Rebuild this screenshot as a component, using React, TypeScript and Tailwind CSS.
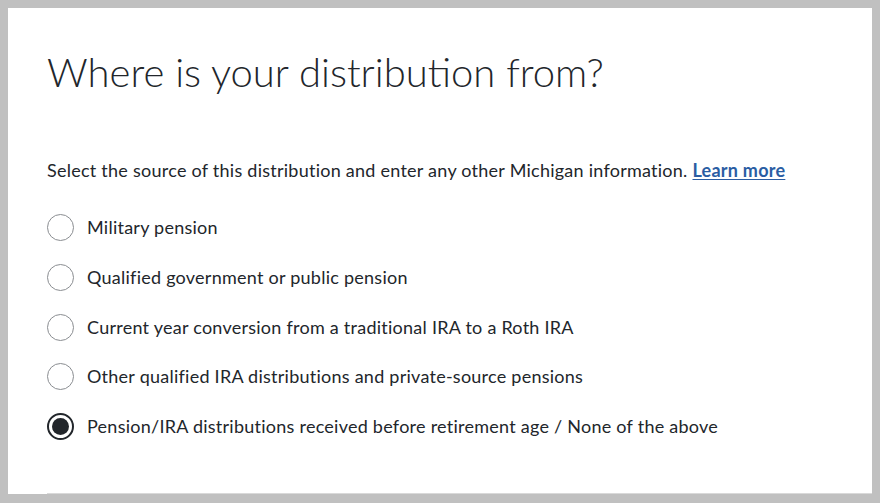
import { useState } from 'react';

const options = [
  'Military pension',
  'Qualified government or public pension',
  'Current year conversion from a traditional IRA to a Roth IRA',
  'Other qualified IRA distributions and private-source pensions',
  'Pension/IRA distributions received before retirement age / None of the above',
];

function Radio({ checked }: { checked: boolean }) {
  if (checked) {
    return (
      <span className="flex h-[27px] w-[27px] shrink-0 items-center justify-center rounded-full border-2 border-[#22262b] bg-white">
        <span className="h-[17px] w-[17px] rounded-full bg-[#22262b]" />
      </span>
    );
  }
  return <span className="h-[27px] w-[27px] shrink-0 rounded-full border border-[#8a8d91] bg-white" />;
}

export default function App() {
  const [selected, setSelected] = useState(4);

  return (
    <div className="h-[503px] w-[880px] bg-[#c0c0c0] pt-2 pl-2 pr-2 pb-[9px] font-['Lato',sans-serif] text-[#22262b]">
      <div className="flex h-full flex-col bg-white pl-[39px]">
        <h1 className="mt-[40px] text-[40px] font-light leading-[48px]">
          Where is your distribution from?
        </h1>

        <p className="mt-[62px] text-[18px] leading-[24px] tracking-[0.25px]">
          Select the source of this distribution and enter any other Michigan information.{' '}
          <a href="#" className="font-bold text-[#2a5da3] underline underline-offset-2">
            Learn more
          </a>
        </p>

        <div className="mt-[32px] flex flex-col gap-[22.75px]">
          {options.map((label, i) => (
            <label
              key={label}
              className="flex cursor-pointer items-center gap-[13px]"
              onClick={() => setSelected(i)}
            >
              <Radio checked={selected === i} />
              <span className="text-[18px] leading-[27px] tracking-[0.25px]">{label}</span>
            </label>
          ))}
        </div>

        <div className="mt-auto border-t border-[#d9d9d9]" />
      </div>
    </div>
  );
}
